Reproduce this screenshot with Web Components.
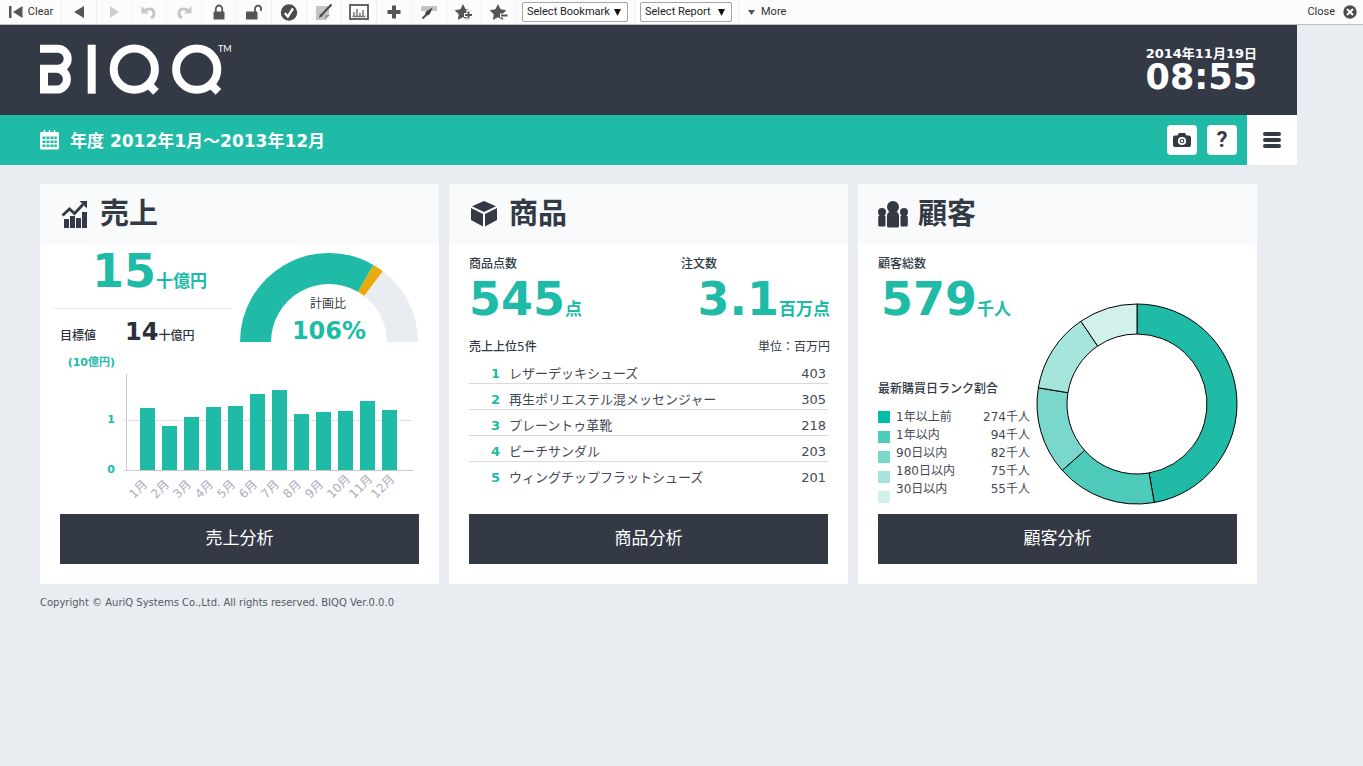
<!DOCTYPE html>
<html lang="ja">
<head>
<meta charset="utf-8">
<title>BIQQ</title>
<style>
  html, body { margin: 0; min-height: 100%; }
  body {
    background: #e9ecf1;
    color: #323a46;
    font: 12px/20px "DejaVu Sans", "Noto Sans CJK JP", sans-serif;
    --teal: #20bba7;
    --dark: #333a46;
    --soft: #444a55;
  }
</style>
</head>
<body>
<biqq-app></biqq-app>

<script>
const define = (name, markup, setup) => {
  const tpl = document.createElement('template');
  tpl.innerHTML = markup;
  customElements.define(name, class extends HTMLElement {
    constructor() {
      super();
      this.attachShadow({ mode: 'open' }).appendChild(tpl.content.cloneNode(true));
    }
    connectedCallback() { if (setup) setup(this, this.shadowRoot); }
  });
};

/* ---------- toolbar ---------- */
define('tool-button', `
  <style>
    :host { display: flex; border-right: 1px solid #f0f0f0; box-sizing: border-box; width: 35px; height: 24px; }
    :host([wide]) { width: 62px; }
    :host([off]) { opacity: .35; }
    button { flex: 1; display: flex; align-items: center; justify-content: center; gap: 4px; padding: 0; border: 0; background: none; color: #333; font: 11px/16px Roboto, sans-serif; }
  </style>
  <button type="button"><slot></slot></button>`,
  (el, root) => root.querySelector('button').setAttribute('aria-label', el.getAttribute('label')));

define('tool-select', `
  <style>
    :host { display: flex; align-items: center; position: relative; height: 24px; padding: 0 6px 0 5px; border-right: 1px solid #f0f0f0; }
    select { appearance: none; height: 20px; width: 106px; border: 1px solid #a5a5a5; border-radius: 2px; background: #fff; color: #222; padding: 0 4px; margin: 0; font: 11px/16px Roboto, sans-serif; }
    :host([narrow]) select { width: 92px; }
    svg { position: absolute; right: 13px; top: 9px; width: 7px; height: 7px; pointer-events: none; }
  </style>
  <select><option></option></select>
  <svg viewBox="0 0 7 7"><path d="M0 0H7L3.500 7Z" fill="#111"/></svg>`,
  (el, root) => {
    const s = root.querySelector('select');
    s.setAttribute('aria-label', el.getAttribute('label'));
    s.options[0].textContent = el.getAttribute('label');
  });

define('tool-bar', `
  <style>
    :host { display: flex; align-items: center; height: 24px; background: #fcfcfc; border-bottom: 1px solid #b9c0c4; }
    .spacer { flex: 1; }
    svg { display: block; }
    button { display: flex; align-items: center; gap: 8px; border: 0; background: none; padding: 0 6px 0 0; color: #333; font: 11px/16px Roboto, sans-serif; }
    .more { gap: 6px; padding: 0 0 0 9px; }
  </style>
  <tool-button wide label="Clear"><svg width="16" height="16" viewBox="0 0 16 16" fill="#555"><path d="M1 2h2.500v12H1zM14.500 2v12L5 8z"/></svg>Clear</tool-button>
  <tool-button label="Back"><svg width="16" height="16" viewBox="0 0 16 16" fill="#555"><path d="M13 2v12L3 8z"/></svg></tool-button>
  <tool-button off label="Forward"><svg width="16" height="16" viewBox="0 0 16 16" fill="#777"><path d="M4 2v12l9-6z"/></svg></tool-button>
  <tool-button off label="Undo"><svg width="18" height="16" viewBox="0 0 18 16"><path d="M5 6.500C9 3.500 14 5 14 9.500c0 2-1 3.500-3 4.500" fill="none" stroke="#666" stroke-width="3"/><path d="M1.500 2v7.500H9z" fill="#666"/></svg></tool-button>
  <tool-button off label="Redo"><svg width="18" height="16" viewBox="0 0 18 16"><path d="M13 6.500C9 3.500 4 5 4 9.500c0 2 1 3.500 3 4.500" fill="none" stroke="#666" stroke-width="3"/><path d="M16.500 2v7.500H9z" fill="#666"/></svg></tool-button>
  <tool-button label="Lock"><svg width="16" height="16" viewBox="0 0 16 16"><path d="M4.800 8V5a3.200 3.500 0 0 1 6.400 0v3" fill="none" stroke="#555" stroke-width="1.800"/><rect x="2.500" y="7.500" width="11" height="8" rx=".6" fill="#555"/></svg></tool-button>
  <tool-button label="Unlock"><svg width="18" height="16" viewBox="0 0 18 16"><path d="M10 8V5a3 3.300 0 0 1 6 0v2" fill="none" stroke="#555" stroke-width="1.800"/><rect x="1" y="7.500" width="11.500" height="8" rx=".6" fill="#555"/></svg></tool-button>
  <tool-button label="Apply"><svg width="18" height="18" viewBox="0 0 18 18"><circle cx="9" cy="9.500" r="8.200" fill="#4c4c4c"/><path d="M4.800 10l3 3.500L13 5.500" fill="none" stroke="#fff" stroke-width="2.300"/></svg></tool-button>
  <tool-button label="Edit"><svg width="18" height="18" viewBox="0 0 18 18"><path d="M1 3h13v9l-4 5H1z" fill="#c4c4c4"/><path d="M10 17v-5h5z" fill="#999"/><path d="M16.500 1.500L6 12.500" stroke="#4c4c4c" stroke-width="2.200"/><path d="M4 15l1-4 3 2z" fill="#4c4c4c"/></svg></tool-button>
  <tool-button label="Chart"><svg width="20" height="16" viewBox="0 0 20 16"><rect x="1" y="1" width="18" height="14" fill="#fff" stroke="#555" stroke-width="1.800"/><path d="M5 12V8M8 12V5M11 12V9M14 12V6M3.500 12.500h13" stroke="#777" stroke-width="1.500"/></svg></tool-button>
  <tool-button label="Add"><svg width="16" height="16" viewBox="0 0 16 16"><path d="M8 1.500v13M1.500 8h13" stroke="#555" stroke-width="4"/></svg></tool-button>
  <tool-button label="Tool"><svg width="18" height="16" viewBox="0 0 18 16"><path d="M1 2h16v5H1z" fill="#c4c4c4"/><path d="M12.500 3.500L10 10 7.500 11.500 5 9.500 6 7.500z" fill="#444"/><path d="M8 9l-5.500 5.500" stroke="#444" stroke-width="1.800"/></svg></tool-button>
  <tool-button label="Add bookmark"><svg width="20" height="18" viewBox="0 0 20 18"><path d="M9 1l2.600 5.300 5.800.9-4.200 4.100 1 5.800L9 14.300 3.800 17l1-5.700L.6 7.200l5.800-.9z" fill="#555"/><path d="M14.500 7v9.500M10 12h9" stroke="#fcfcfc" stroke-width="4"/><path d="M14.500 8.500v7M11 12h7" stroke="#555" stroke-width="2"/></svg></tool-button>
  <tool-button label="Remove bookmark"><svg width="20" height="18" viewBox="0 0 20 18"><path d="M9 1l2.600 5.300 5.800.9-4.200 4.100 1 5.800L9 14.300 3.800 17l1-5.700L.6 7.200l5.800-.9z" fill="#555"/><path d="M11 12.500h9" stroke="#fcfcfc" stroke-width="4"/><path d="M12 12.500h6.500" stroke="#555" stroke-width="2"/></svg></tool-button>
  <tool-select label="Select Bookmark"></tool-select>
  <tool-select narrow label="Select Report"></tool-select>
  <button type="button" class="more"><svg width="7" height="5" viewBox="0 0 7 5"><path d="M0 0h7L3.500 5z" fill="#555"/></svg>More</button>
  <span class="spacer"></span>
  <button type="button">Close <svg width="14" height="14" viewBox="0 0 14 14"><circle cx="7" cy="7" r="6.700" fill="#4c4c4c"/><path d="M4 4l6 6M10 4l-6 6" stroke="#fff" stroke-width="2"/></svg></button>`);

/* ---------- header ---------- */
define('brand-header', `
  <style>
    :host { display: flex; justify-content: space-between; height: 90px; padding: 0 40px; background: var(--dark); color: #fff; font-weight: bold; }
    svg { margin-top: 19px; }
    .clock { display: flex; flex-direction: column; align-items: flex-end; padding-top: 22px; }
    .date { font-size: 13px; line-height: 14px; }
    .time { font-size: 35px; line-height: 32px; }
  </style>
  <svg width="192" height="54" viewBox="0 0 192 54" role="img" aria-label="BIQQ" fill="none" stroke="#fff" stroke-width="8">
    <path d="M0 4.800H17.700a10 10 0 0 1 0 20H4V45.600H16.500a10.400 10.400 0 0 0 0-20.800"/>
    <path d="M51.700.7v49"/>
    <circle cx="94.300" cy="25.200" r="20.600"/><path d="M106 38l10 9.800"/>
    <circle cx="156.700" cy="25.200" r="20.600"/><path d="M168.400 38l10 9.800"/>
    <text x="178" y="8" fill="#fff" stroke="none" font-family="Lato" font-weight="400" font-size="9">TM</text>
  </svg>
  <div class="clock"><span class="date">2014年11月19日</span><span class="time">08:55</span></div>`);

define('period-bar', `
  <style>
    :host { display: flex; align-items: center; height: 50px; padding-left: 40px; background: var(--teal); color: #fff; }
    h1 { flex: 1; margin: 0 0 0 11px; font-size: 17px; line-height: 24px; font-weight: bold; padding-top: 2px; }
    button { display: flex; align-items: center; justify-content: center; padding: 0; border: 0; background: #fff; width: 30px; height: 30px; border-radius: 4px; margin-right: 10px; color: var(--dark); font: bold 22px/30px Roboto, sans-serif; }
    .menu { width: 50px; height: 50px; border-radius: 0; margin: 0; }
  </style>
  <svg width="19" height="20" viewBox="0 0 19 20"><path d="M1.500 2H17.500a1.500 1.500 0 0 1 1.500 1.500V18a1.500 1.500 0 0 1-1.500 1.500H1.500A1.500 1.500 0 0 1 0 18V3.500A1.500 1.500 0 0 1 1.500 2Z" fill="#fff"/><path d="M4.500 0v3M9.500 0v3M14.500 0v3" stroke="#fff" stroke-width="1.500"/><path d="M2.500 6.500h3v2.500h-3zM6.500 6.500h3v2.500h-3zM10.500 6.500h3v2.500h-3zM14.300 6.500h2.500v2.500h-2.500zM2.500 10.500h3v2.500h-3zM6.500 10.500h3v2.500h-3zM10.500 10.500h3v2.500h-3zM14.300 10.500h2.500v2.500h-2.500zM2.500 14.500h3v2.500h-3zM6.500 14.500h3v2.500h-3zM10.500 14.500h3v2.500h-3zM14.300 14.500h2.500v2.500h-2.500z" fill="#20bba7"/></svg>
  <h1>年度 2012年1月～2013年12月</h1>
  <button type="button" aria-label="camera"><svg width="18" height="16" viewBox="0 0 18 16"><path d="M6 1h6l1.500 2.500H16a2 2 0 0 1 2 2V13a2 2 0 0 1-2 2H2a2 2 0 0 1-2-2V5.500a2 2 0 0 1 2-2h2.500z" fill="#333a46"/><circle cx="9" cy="9" r="3.200" fill="#333a46" stroke="#fff" stroke-width="1.800"/><circle cx="9" cy="9" r="1.200" fill="#fff"/></svg></button>
  <button type="button">?</button>
  <button type="button" class="menu" aria-label="menu"><svg width="18" height="16" viewBox="0 0 18 16"><path d="M2 2h14M2 8h14M2 14h14" stroke="#333a46" stroke-width="4" stroke-linecap="round"/></svg></button>`);

/* ---------- cards ---------- */
define('dash-card', `
  <style>
    :host { display: flex; flex-direction: column; min-height: 400px; background: #fff; }
    header { display: flex; align-items: center; height: 60px; padding-left: 20px; background: #f9fafc; }
    .icon { width: 30px; height: 30px; margin-right: 10px; }
    h2 { margin: 0; font-size: 29px; line-height: 40px; font-weight: bold; }
    .body { flex: 1; }
    button { height: 50px; margin: 0 20px 20px; padding: 0 0 2px; border: 0; background: var(--dark); color: #fff; font-family: inherit; font-size: 17px; font-weight: 400; line-height: 24px; }
  </style>
  <header><div class="icon"><slot name="icon"></slot></div><h2></h2></header>
  <div class="body"><slot></slot></div>
  <button type="button"></button>`,
  (el, root) => {
    const t = el.getAttribute('heading');
    root.querySelector('h2').textContent = t;
    root.querySelector('button').textContent = t + '分析';
  });

define('big-number', `
  <style>
    :host { display: block; color: var(--teal); font-size: 46px; font-weight: bold; line-height: 50px; white-space: nowrap; }
    small { font-size: 17px; line-height: 17px; }
    :host([small]) { color: #2b303b; font-size: 24px; line-height: 43px; }
    :host([small]) small { font-size: 12px; font-weight: 500; }
  </style><slot></slot><small></small>`,
  (el, root) => root.querySelector('small').textContent = el.getAttribute('unit'));

define('gauge-chart', `
  <style>:host { display: block; } svg { display: block; }</style>
  <svg width="178" height="92" viewBox="0 0 178 92" text-anchor="middle">
    <path d="M0 90A89 89 0 0 1 133.500 12.900L118 39.800A58 58 0 0 0 31 90Z" fill="#20bba7"/>
    <path d="M133.500 12.900A89 89 0 0 1 143 19.300L124.200 43.900A58 58 0 0 0 118 39.800Z" fill="#e9ab0c"/>
    <path d="M143 19.300A89 89 0 0 1 178 90H147A58 58 0 0 0 124.200 43.900Z" fill="#e9ecf1"/>
    <text x="88" y="56" font-size="12" fill="#323a46">計画比</text>
    <text x="89" y="87" font-size="24" font-weight="bold" fill="#20bba7">106%</text>
  </svg>`);

define('month-bars', `
  <style>:host { display: block; } svg { display: block; }</style>
  <svg width="360" height="152" viewBox="60 352 360 152"></svg>`,
  (el, root) => {
    const tops = [408, 426, 417, 407, 406, 394, 390, 414, 412, 411, 401, 410];
    let s = '<path d="M124 420.500H412" stroke="#d5d7da" stroke-dasharray="3 1"/>';
    tops.forEach((t, i) => {
      const x = 140 + i * 22;
      s += `<rect x="${x}" y="${t}" width="15" height="${470 - t}" fill="#20bba7"/>` +
        `<text transform="translate(${x - 6} 499) rotate(-45)" font-size="12" fill="#a9afbb">${i + 1}月</text>`;
    });
    s += '<path d="M126.500 374V470M124 470.500H413" stroke="#c8cacd" fill="none"/>' +
      '<g fill="#20bba7" font-size="11" font-weight="bold" text-anchor="end"><text x="115" y="366">(10億円)</text><text x="115" y="423">1</text><text x="115" y="473">0</text></g>';
    root.querySelector('svg').innerHTML = s;
  });

define('sales-panel', `
  <style>
    :host { display: block; }
    .top { display: grid; grid-template-columns: 179px 178px; column-gap: 9px; margin-left: 12px; }
    .value { box-sizing: border-box; height: 65px; border-bottom: 1px solid #e6e9ee; padding: 2px 0 0 40px; }
    .target { box-sizing: border-box; display: flex; align-items: baseline; height: 43px; padding: 2px 0 0 8px; font-weight: 500; color: #2b303b; }
    .target span { width: 65px; }
    gauge-chart { margin-top: 8px; }
    month-bars { margin-left: 20px; }
  </style>
  <div class="top">
    <div>
      <div class="value"><big-number unit="十億円">15</big-number></div>
      <div class="target"><span>目標値</span><big-number small unit="十億円">14</big-number></div>
    </div>
    <gauge-chart></gauge-chart>
  </div>
  <month-bars></month-bars>`);

define('product-panel', `
  <style>
    :host { display: block; padding: 10px 18px 0 20px; }
    .stats { display: grid; grid-template-columns: 1fr 149px; }
    .label { font-weight: 500; }
    .right { text-align: right; }
    .caption { display: flex; justify-content: space-between; margin-top: 13px; }
    table { width: calc(100% - 2px); border-collapse: collapse; margin-top: 1px; font-size: 13px; line-height: 18px; color: var(--soft); }
    td { padding: 7px 0 0; border-bottom: 1px solid #d8dadd; }
    tr:last-child td { border: 0; }
    td:first-child { width: 31px; padding-right: 9px; text-align: right; color: var(--teal); font-weight: bold; }
    td:last-child { text-align: right; padding-right: 2px; }
  </style>
  <div class="stats">
    <div><div class="label">商品点数</div><big-number unit="点">545</big-number></div>
    <div><div class="label">注文数</div><big-number class="right" unit="百万点">3.1</big-number></div>
  </div>
  <div class="caption"><span class="label">売上上位5件</span><span>単位：百万円</span></div>
  <table><tbody>
    <tr><td>1</td><td>レザーデッキシューズ</td><td>403</td></tr>
    <tr><td>2</td><td>再生ポリエステル混メッセンジャー</td><td>305</td></tr>
    <tr><td>3</td><td>プレーントゥ革靴</td><td>218</td></tr>
    <tr><td>4</td><td>ビーチサンダル</td><td>203</td></tr>
    <tr><td>5</td><td>ウィングチップフラットシューズ</td><td>201</td></tr>
  </tbody></table>`);

const RANKS = [
  ['1年以上前', 274, '#20bba7'], ['1年以内', 94, '#4dcab9'], ['90日以内', 82, '#79d7cb'],
  ['180日以内', 75, '#a5e5dc'], ['30日以内', 55, '#d2f1ed']
];

define('rank-donut', `
  <style>:host { display: block; } svg { display: block; overflow: visible; }</style>
  <svg width="200" height="200" viewBox="-100 -100 200 200"></svg>`,
  (el, root) => {
    const total = RANKS.reduce((n, r) => n + r[1], 0);
    const at = (r, a) => `${r * Math.sin(a)} ${-r * Math.cos(a)}`;
    let a = 0;
    root.querySelector('svg').innerHTML = RANKS.map(([, n, c]) => {
      const b = a + n / total * 2 * Math.PI;
      const d = `M${at(100, a)}A100 100 0 0 1 ${at(100, b)}L${at(70, b)}A70 70 0 0 0 ${at(70, a)}Z`;
      a = b;
      return `<path d="${d}" fill="${c}" stroke="#000"/>`;
    }).join('');
  });

define('customer-panel', `
  <style>
    :host { display: flex; padding: 10px 20px 0; }
    .info { flex: 1; padding-right: 7px; }
    .label { font-weight: 500; }
    big-number { padding-left: 3px; }
    .rank { margin-top: 55px; }
    .legend { display: flex; align-items: flex-start; margin-top: 9px; }
    .keys { display: flex; flex-direction: column; gap: 8px; padding-top: 3px; margin-right: 6px; }
    .keys i { width: 12px; height: 12px; }
    table { flex: 1; border-collapse: collapse; line-height: 18px; font-size: 12px; white-space: nowrap; color: var(--soft); }
    td { padding: 0; }
    td:last-child { text-align: right; }
    rank-donut { margin-top: 50px; }
  </style>
  <div class="info">
    <div class="label">顧客総数</div>
    <big-number unit="千人">579</big-number>
    <div class="label rank">最新購買日ランク割合</div>
    <div class="legend"><div class="keys"></div><table><tbody></tbody></table></div>
  </div>
  <rank-donut></rank-donut>`,
  (el, root) => {
    root.querySelector('.keys').innerHTML = RANKS.map((r, i) => `<i style="background:${i ? r[2] : '#00bda6'}"></i>`).join('');
    root.querySelector('tbody').innerHTML = RANKS.map(r => `<tr><td>${r[0]}</td><td>${r[1]}千人</td></tr>`).join('');
  });

define('biqq-app', `
  <style>
    :host { display: block; }
    .page { margin-right: 66px; }
    main { display: grid; grid-template-columns: repeat(3, minmax(0, 1fr)); gap: 10px; padding: 19px 40px 0; }
    footer { padding: 10px 40px; font-size: 10px; line-height: 18px; color: #555b66; }
  </style>
  <tool-bar></tool-bar>
  <div class="page">
    <brand-header></brand-header>
    <period-bar></period-bar>
    <main>
      <dash-card heading="売上">
        <svg slot="icon" width="30" height="30" viewBox="0 0 30 30" fill="#333a46"><path d="M4 20h5v9H4zM10 17h5v12h-5zM16 19h5v10h-5zM22 13h5v16h-5z"/><path d="M2.500 16.500l7-6.500 5 4.500L23 5.500" fill="none" stroke="#333a46" stroke-width="2.800"/><path d="M19.500 2h7.500v7.500z"/></svg>
        <sales-panel></sales-panel>
      </dash-card>
      <dash-card heading="商品">
        <svg slot="icon" width="30" height="30" viewBox="0 0 30 30" fill="#333a46"><path d="M15 2l12 5.200L15 13 3 7.200zM2 9l12 6v12.500L2 21zM28 9v12l-12 6.500V15z"/></svg>
        <product-panel></product-panel>
      </dash-card>
      <dash-card heading="顧客">
        <svg slot="icon" width="30" height="30" viewBox="0 0 30 30" fill="#333a46"><circle cx="15" cy="8" r="6"/><path d="M12 13h6c2 0 3 2 3 4v10c0 1-1 1.500-2 1.500h-8c-1 0-2-.5-2-1.500V17c0-2 1-4 3-4z"/><circle cx="4" cy="13" r="4"/><circle cx="26" cy="13" r="4"/><path d="M3 16h2.500c1.500 0 2 1 2 2v8c0 1-.5 1.500-1.500 1.500H2C1 27.500.2 27 .2 26v-7.500C.2 17 1 16 3 16zM24.500 16H27c2 0 2.800 1 2.800 2.500V26c0 1-.8 1.500-1.800 1.500h-4c-1 0-1.500-.5-1.500-1.500v-8c0-1 .5-2 2-2z"/></svg>
        <customer-panel></customer-panel>
      </dash-card>
    </main>
    <footer>Copyright © AuriQ Systems Co.,Ltd. All rights reserved. BIQQ Ver.0.0.0</footer>
  </div>`);
</script>
</body>
</html>
